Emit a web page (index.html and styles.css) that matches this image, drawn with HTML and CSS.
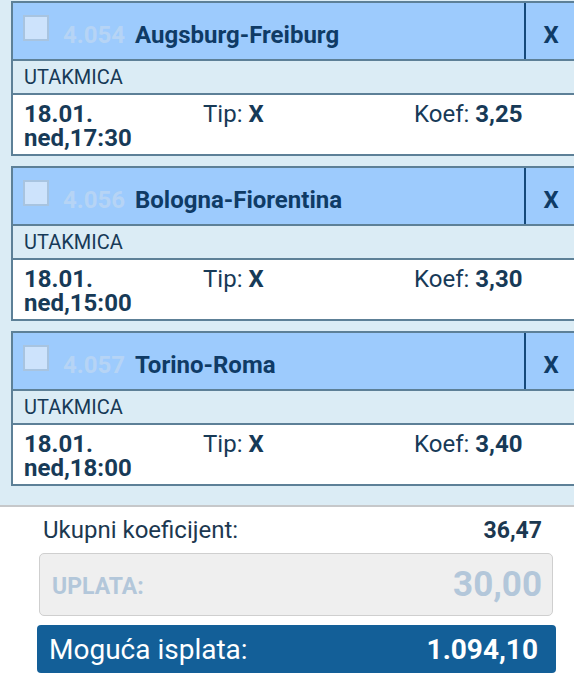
FILE: index.html
```html
<!DOCTYPE html>
<html lang="hr">
<head>
    <meta charset="UTF-8">
    <meta name="viewport" content="width=device-width, initial-scale=1.0">
    <title>Listić</title>
    <link rel="stylesheet" href="styles.css">
</head>
<body>
<div class="slip">
    <div class="pair">
        <div class="pair-head">
            <span class="check"></span>
            <span class="code">4.054</span>
            <span class="teams">Augsburg-Freiburg</span>
            <span class="remove">X</span>
        </div>
        <div class="pair-type">UTAKMICA</div>
        <div class="pair-info">
            <div class="when">18.01.<br>ned,17:30</div>
            <div class="tip">Tip: <b>X</b></div>
            <div class="odd">Koef: <b>3,25</b></div>
        </div>
    </div>

    <div class="pair">
        <div class="pair-head">
            <span class="check"></span>
            <span class="code">4.056</span>
            <span class="teams">Bologna-Fiorentina</span>
            <span class="remove">X</span>
        </div>
        <div class="pair-type">UTAKMICA</div>
        <div class="pair-info">
            <div class="when">18.01.<br>ned,15:00</div>
            <div class="tip">Tip: <b>X</b></div>
            <div class="odd">Koef: <b>3,30</b></div>
        </div>
    </div>

    <div class="pair">
        <div class="pair-head">
            <span class="check"></span>
            <span class="code">4.057</span>
            <span class="teams">Torino-Roma</span>
            <span class="remove">X</span>
        </div>
        <div class="pair-type">UTAKMICA</div>
        <div class="pair-info">
            <div class="when">18.01.<br>ned,18:00</div>
            <div class="tip">Tip: <b>X</b></div>
            <div class="odd">Koef: <b>3,40</b></div>
        </div>
    </div>
</div>

<div class="summary">
    <div class="total">
        <span>Ukupni koeficijent:</span>
        <b>36,47</b>
    </div>
    <div class="stake">
        <span class="stake-label">UPLATA:</span>
        <span class="stake-value">30,00</span>
    </div>
    <div class="payout">
        <span>Moguća isplata:</span>
        <b>1.094,10</b>
    </div>
</div>
</body>
</html>
```

FILE: styles.css
```css
body { margin: 0; font-family: Roboto, "Noto Sans", sans-serif; color: #173a57; background: #fff; overflow: hidden; }
.slip { background: #dbecf5; padding: 1px 0 9px 11px; border-bottom: 2px solid #c6c8ca; }
.pair { border: 2px solid #5d8097; border-right: none; margin-bottom: 10px; margin-right: -2px; }
.pair-head { display: flex; align-items: flex-start; height: 56px; background: #9dcbfd; border-bottom: 2px solid #5d8097; font-size: 24px; font-weight: bold; line-height: 28px; }
.check { width: 22px; height: 22px; margin: 12px 14px 0 10px; background: #cde3fc; border: 2px solid #a8c4e0; }
.code { width: 72px; margin-top: 18px; color: #b6d4f5; }
.teams { flex: 1; margin-top: 18px; color: #0f3b66; }
.remove { width: 52px; height: 56px; box-sizing: border-box; padding-top: 18px; text-align: center; border-left: 2px solid #15497a; color: #0f3b66; }
.pair-type { height: 32px; line-height: 33px; padding-left: 11px; font-size: 20px; border-bottom: 2px solid #5d8097; background: #dbecf5; }
.pair-info { display: grid; grid-template-columns: 179px 211px auto; height: 59px; padding: 7px 0 0 11px; box-sizing: border-box; background: #fff; font-size: 24px; line-height: 24px; }
.when { font-weight: bold; }
.summary { padding: 10px 20px 0 37px; }
.total { display: flex; justify-content: space-between; align-items: baseline; padding: 0 12px 0 6px; font-size: 24px; color: #1c3850; line-height: 26px; }
.total b { font-size: 23px; }
.stake { display: flex; justify-content: space-between; align-items: center; height: 61px; margin: 9px 1px 0 2px; padding: 0 10px 0 12px; background: #efefef; border: 1px solid #cfcfcf; border-radius: 5px; color: #b3c7da; }
.stake-label { font-size: 23px; font-weight: bold; padding-top: 4px; }
.stake-value { font-size: 35px; font-weight: bold; }
.payout { display: flex; justify-content: space-between; align-items: center; height: 48px; margin-top: 9px; margin-right: -2px; padding: 0 18px 0 12px; background: #135f98; color: #fff; border-radius: 4px; font-size: 28px; }
```
